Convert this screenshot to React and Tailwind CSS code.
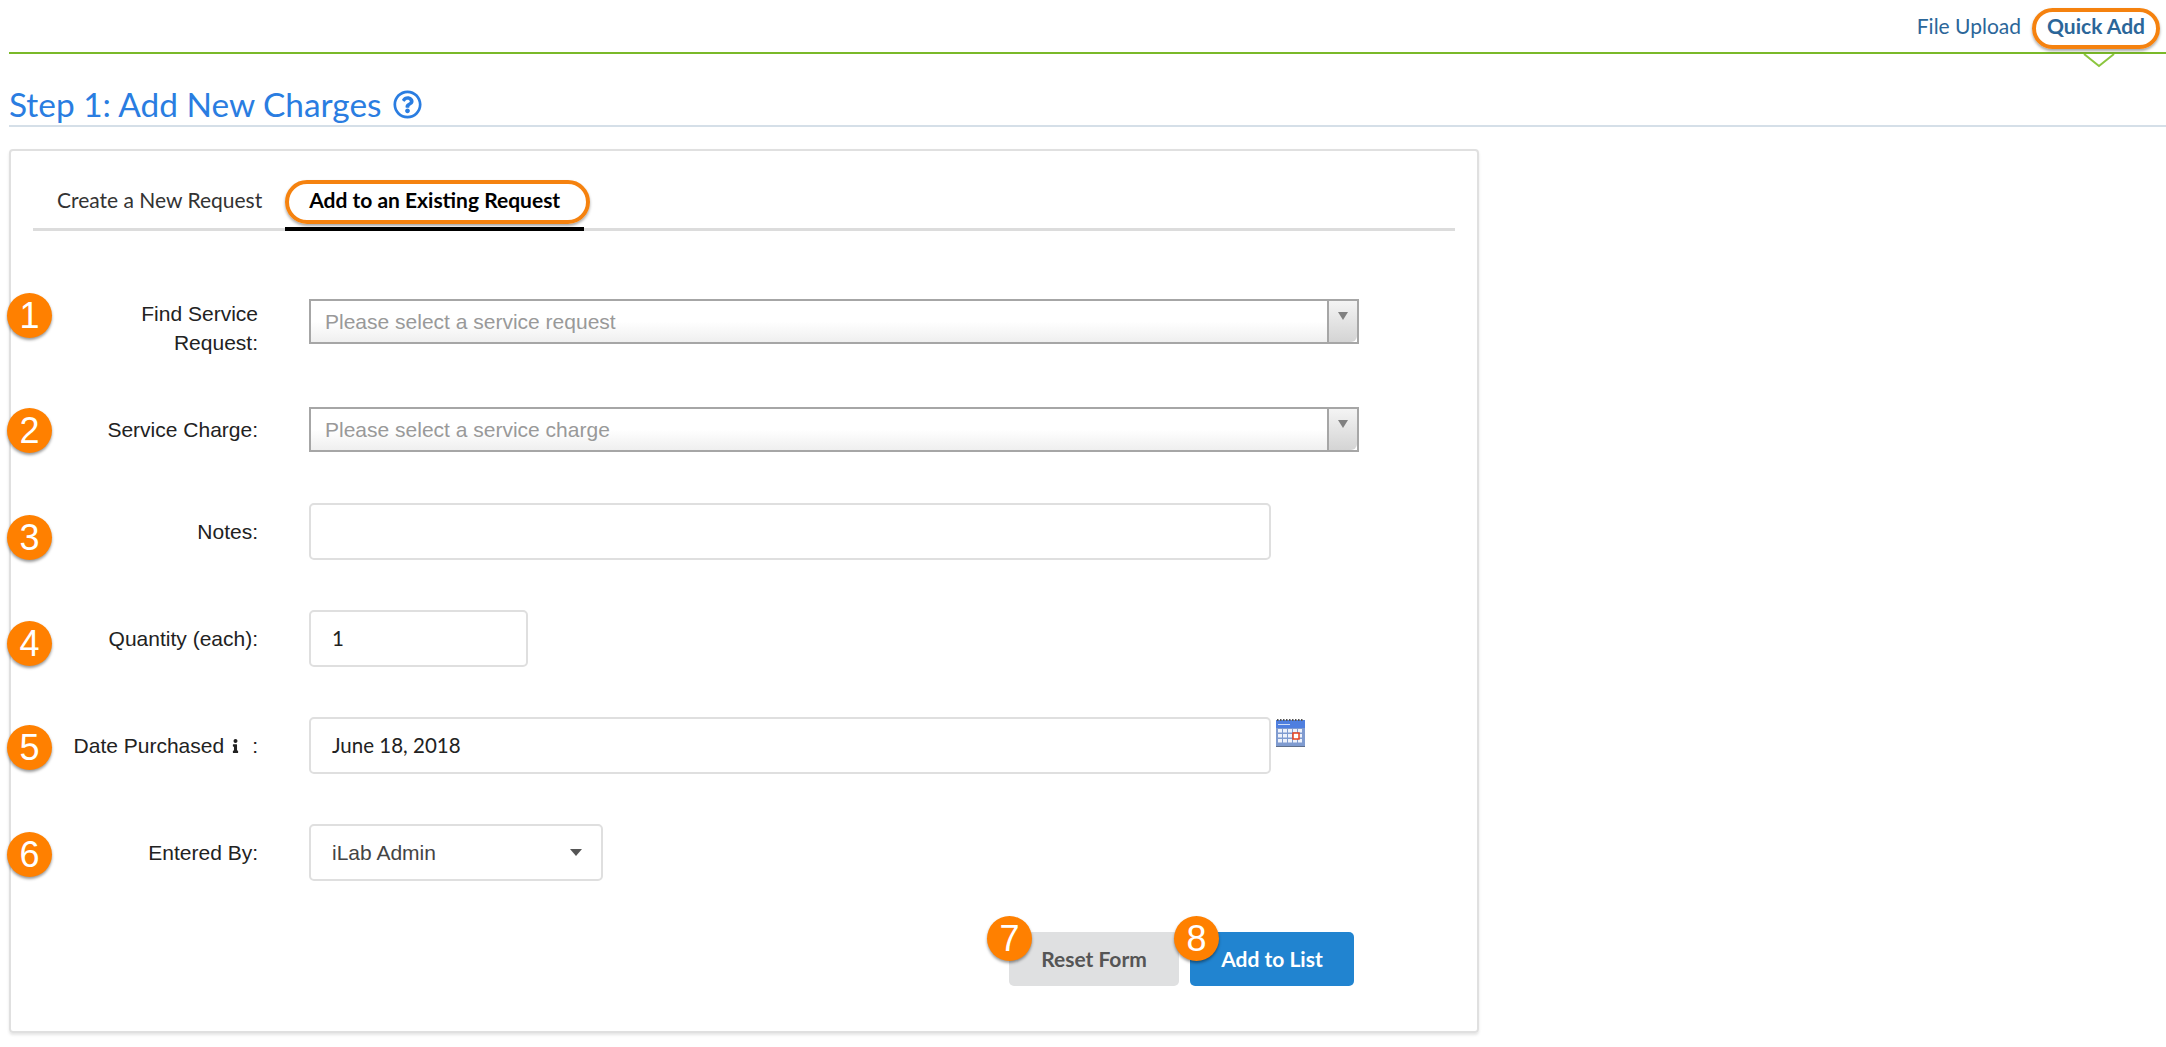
import { FaInfo, FaRegQuestionCircle } from "react-icons/fa";

function Badge({ n, className = "" }) {
  return (
    <span
      className={`absolute flex h-[45px] w-[45px] items-center justify-center rounded-full bg-[#ff8000] font-['Liberation_Sans',sans-serif] text-[36px] font-normal leading-none text-white shadow-[0_2px_3px_rgba(0,0,0,0.4)] ${className}`}
    >
      {n}
    </span>
  );
}

function Highlight({ className = "" }) {
  return (
    <span
      className={`pointer-events-none absolute rounded-full border-[4px] border-[#f5820f] shadow-[0_2px_3px_rgba(0,0,0,0.35)] ${className}`}
    />
  );
}

function Row({ n, label, badgeClass, className = "items-center", children }) {
  return (
    <div className={`relative flex ${className}`}>
      <Badge n={n} className={`left-[-26px] ${badgeClass}`} />
      <label className="w-[259px] pr-[34px] text-right text-[21px] leading-[29px] text-[#222]">
        {label}
      </label>
      <div className="ml-[17px] flex flex-1 items-start">{children}</div>
    </div>
  );
}

function ComboBox({ placeholder }) {
  return (
    <div className="flex h-[45px] w-[1050px] border-2 border-[#a6a6a6]">
      <div className="flex flex-1 items-center bg-gradient-to-b from-white from-50% to-[#efefef] pl-[14px] text-[21px] text-[#999]">
        {placeholder}
      </div>
      <div className="flex w-[30px] justify-center rounded-br-[6px] border-l-2 border-[#a6a6a6] bg-gradient-to-b from-[#f4f4f4] to-[#d4d4d4] pt-[10px]">
        <svg width="12" height="10" viewBox="0 0 12 10">
          <path d="M1 1h10L6 9z" fill="#808080" />
        </svg>
      </div>
    </div>
  );
}

function TextBox({ value, className = "" }) {
  return (
    <div
      className={`flex h-[57px] items-center rounded-[5px] border-2 border-[#dfdfdf] pl-[21px] font-['Lato',sans-serif] text-[20.5px] text-[#222] ${className}`}
    >
      {value}
    </div>
  );
}

function CalendarIcon() {
  return (
    <svg width="29" height="28" viewBox="0 0 29 28" className="ml-[5px] mt-[2px]">
      <rect x="0" y="1" width="29" height="27" fill="#7f9bd0" />
      <rect x="0" y="27" width="29" height="1" fill="#5f6f8c" />
      <rect x="0" y="1" width="29" height="8" fill="#4f7fdf" />
      <rect x="2" y="5" width="12" height="1" fill="#cfdcf5" />
      <path d="M1 1h27" stroke="#555" strokeWidth="2" strokeDasharray="1.5 1.5" />
      <g fill="#eef2fb">
        {[10, 15, 20].map((y) =>
          [2, 7, 12, 17, 22].map((x) => <rect key={`${x}-${y}`} x={x} y={y} width="4" height="3.5" />)
        )}
      </g>
      <rect x="17" y="14" width="6" height="6" fill="#fff" stroke="#e8401c" strokeWidth="1.5" />
    </svg>
  );
}

export default function App() {
  return (
    <div className="min-h-screen bg-white pl-[9px] font-['Lato',sans-serif]">
      {/* top tabs */}
      <nav className="flex h-[54px] items-start justify-end gap-[26px] border-b-2 border-[#7ab929] pr-[21px] pt-[13px] text-[21px] leading-[26px] text-[#2b6699]">
        <a>File Upload</a>
        <a className="relative font-bold">
          Quick Add
          <Highlight className="-inset-x-[15px] -bottom-[10px] -top-[5px]" />
          <svg width="32" height="14" viewBox="0 0 32 14" className="absolute left-[36px] top-[41px]">
            <path d="M1 0l15 12L31 0" fill="none" stroke="#8cc63f" strokeWidth="2" />
          </svg>
        </a>
      </nav>

      <h1 className="mt-[31px] flex items-center border-b-2 border-[#d5dfe8] pb-[1px] text-[33.4px] leading-[39px] text-[#2a7de1]">
        Step 1: Add New Charges
        <FaRegQuestionCircle className="ml-[11px] h-[29px] w-[29px]" />
      </h1>

      {/* form card */}
      <div className="mt-[22px] h-[884px] w-[1470px] rounded-[4px] border-2 border-[#e0e0e0] px-[22px] pt-[30px] shadow-[0_2px_3px_rgba(0,0,0,0.1)]">
        <div className="flex h-[50px] border-b-[3px] border-[#dcdcdc] text-[21px]">
          <div className="px-6 pt-[5px] leading-[28px] text-[#333]">Create a New Request</div>
          <div className="relative -mb-[3px] ml-[-1px] w-[299px] border-b-[4px] border-black px-6 pt-[5px] font-bold leading-[28px] text-black">
            Add to an Existing Request
            <Highlight className="inset-x-0 bottom-[3px] top-[-1px] w-[305px]" />
          </div>
        </div>

        <form className="mt-[68px] font-['Liberation_Sans',sans-serif]">
          <Row n="1" badgeClass="top-[-6px]" className="items-start" label={<>Find Service<br />Request:</>}>
            <ComboBox placeholder="Please select a service request" />
          </Row>
          <Row n="2" badgeClass="top-[1px]" label="Service Charge:" className="mt-[50px] items-center">
            <ComboBox placeholder="Please select a service charge" />
          </Row>
          <Row n="3" badgeClass="top-[12px]" label="Notes:" className="mt-[51px] items-center">
            <TextBox className="w-[962px]" />
          </Row>
          <Row n="4" badgeClass="top-[11px]" label="Quantity (each):" className="mt-[50px] items-center">
            <TextBox value="1" className="w-[219px]" />
          </Row>
          <Row
            n="5"
            badgeClass="top-[8px]"
            label={
              <span className="inline-flex items-center justify-end whitespace-nowrap">
                Date Purchased
                <FaInfo className="ml-[7px] mr-[12px] h-[14px] w-[9px] text-[#222]" />:
              </span>
            }
            className="mt-[50px] items-center"
          >
            <TextBox value="June 18, 2018" className="w-[962px]" />
            <CalendarIcon />
          </Row>
          <Row n="6" badgeClass="top-[8px]" label="Entered By:" className="mt-[50px] items-center">
            <div className="flex h-[57px] w-[294px] items-center justify-between rounded-[5px] border-2 border-[#dfdfdf] pl-[21px] pr-[19px] text-[21px] text-[#444]">
              iLab Admin
              <svg width="12" height="7" viewBox="0 0 12 7">
                <path d="M0 0h12L6 7z" fill="#555" />
              </svg>
            </div>
          </Row>

          <div className="mt-[51px] flex w-[1321px] justify-end gap-[11px] font-['Lato',sans-serif] text-[21px] font-bold">
            <button type="button" className="relative h-[54px] w-[170px] rounded-[5px] bg-[#dfe0e1] text-[#555]">
              Reset Form
              <Badge n="7" className="left-[-22px] top-[-16px]" />
            </button>
            <button type="button" className="relative h-[54px] w-[164px] rounded-[5px] bg-[#2184d0] text-white">
              Add to List
              <Badge n="8" className="left-[-16px] top-[-16px]" />
            </button>
          </div>
        </form>
      </div>
    </div>
  );
}
